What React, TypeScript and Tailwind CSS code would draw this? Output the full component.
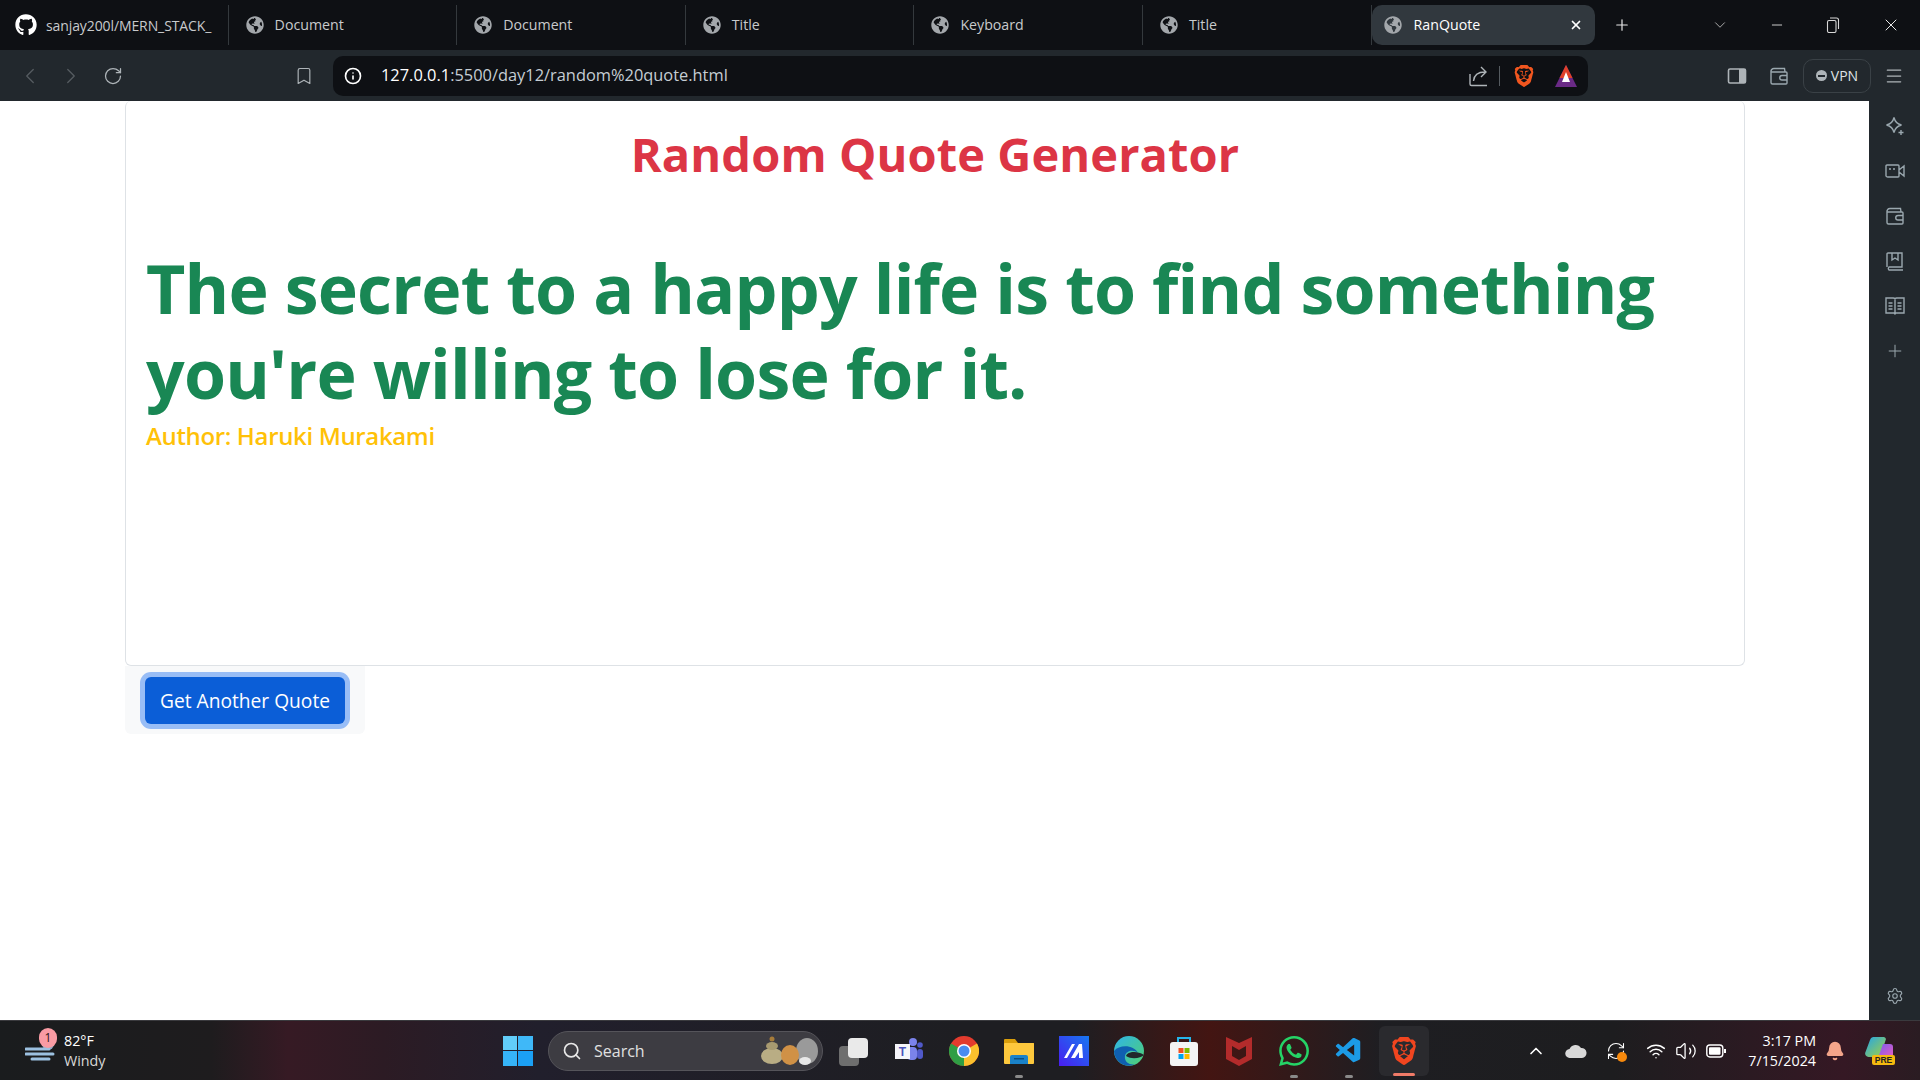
import { FaGithub, FaGlobeAmericas } from "react-icons/fa";
import { SiBrave, SiWhatsapp } from "react-icons/si";
import { VscVscode } from "react-icons/vsc";
import {
  ChevronLeft,
  ChevronRight,
  ChevronDown,
  ChevronUp,
  RotateCw,
  Bookmark,
  Info,
  Menu,
  Plus,
  X,
  Minus,
  Settings,
  Search,
  Wifi,
  Volume2,
  RefreshCw,
  Bell,
} from "lucide-react";

const tabs = ["sanjay200l/MERN_STACK_", "Document", "Document", "Title", "Keyboard", "Title"];

function Tab({ title, index }: { title: string; index: number }) {
  return (
    <div className="flex h-10 w-[228.6px] items-center overflow-hidden border-r border-[#34393d] pl-[15px] whitespace-nowrap last:border-r-0">
      {index === 0 ? (
        <FaGithub className="h-[22px] w-[22px] shrink-0 text-white" />
      ) : (
        <FaGlobeAmericas className="ml-[2px] h-[18px] w-[18px] shrink-0 text-[#a3a7ab]" />
      )}
      <span className={index === 0 ? "ml-[9px] text-[14px] tracking-[-0.1px] text-[#c8cacc]" : "ml-[11px] text-[14.2px] text-[#c8cacc]"}>{title}</span>
    </div>
  );
}

function TabBar() {
  return (
    <div className="flex h-[50px] items-center bg-[#0e1014]">
      {tabs.map((t, i) => (
        <Tab key={i} title={t} index={i} />
      ))}
      <div className="flex h-10 w-[223px] items-center rounded-[10px] bg-[#31383e] pl-[12px] pr-[12px]">
        <FaGlobeAmericas className="h-[18px] w-[18px] text-[#a3a7ab]" />
        <span className="ml-[12px] text-[14.2px] text-white">RanQuote</span>
        <X className="ml-auto h-[14px] w-[14px] text-white" strokeWidth={3} />
      </div>
      <Plus className="ml-[18px] h-[18px] w-[18px] text-[#e8e8e8]" strokeWidth={1.6} />
      <ChevronDown className="ml-[80px] h-[18px] w-[18px] text-[#b8b8b8]" strokeWidth={1.2} />
      <Minus className="ml-[40px] h-[16px] w-[16px] text-[#d8d8d8]" strokeWidth={1.4} />
      <svg className="ml-[41px]" width="14" height="16" viewBox="0 0 14 16" fill="none" stroke="#d8d8d8" strokeWidth="1.1">
        <rect x="1.5" y="3.5" width="8.5" height="12" rx="1.5" />
        <path d="M4 1 H10.5 A2 2 0 0 1 12.5 3 V12" />
      </svg>
      <X className="ml-[41px] h-[20px] w-[20px] text-[#e8e8e8]" strokeWidth={1.2} />
    </div>
  );
}

function BraveTriangle() {
  return (
    <svg width="24" height="24" viewBox="0 0 24 24">
      <path d="M12 1 L23 23 H1 Z" fill="#6a2a86" />
      <path d="M12 1 L18.5 14 H5.5 Z" fill="#e0402a" />
      <path d="M12 8 L16 18 H8 Z" fill="#ffffff" />
    </svg>
  );
}

function ShareIcon() {
  return (
    <svg className="ml-auto" width="22" height="22" viewBox="0 0 22 22" fill="none" stroke="#aeb4b8" strokeWidth="1.4">
      <path d="M2 9 V19 A1.5 1.5 0 0 0 3.5 20.5 H19" />
      <path d="M5.5 16 C6 10 10 7 17 7 M13 2 L18 7 L13 12" />
    </svg>
  );
}

function ToolBar() {
  return (
    <div className="flex h-[51px] items-center bg-[#22282d]">
      <ChevronLeft className="ml-[17px] h-[26px] w-[26px] text-[#565c61]" strokeWidth={1.2} />
      <ChevronRight className="ml-[15px] h-[26px] w-[26px] text-[#565c61]" strokeWidth={1.2} />
      <RotateCw className="ml-[19px] h-[20px] w-[20px] text-[#aeb4b8]" strokeWidth={1.5} />
      <Bookmark className="ml-[171px] h-[20px] w-[20px] text-[#aeb4b8]" strokeWidth={1.4} />
      <div className="ml-[19px] flex h-10 w-[1255px] items-center rounded-[10px] bg-[#0e1014] pl-[11px]">
        <Info className="h-[18px] w-[18px] text-white" strokeWidth={2.2} />
        <span className="ml-[19px] text-[16.4px] text-[#c5cdd3]">
          <span className="text-white">127.0.0.1</span>:5500/day12/random%20quote.html
        </span>
        <ShareIcon />
        <div className="ml-[9px] h-[20px] w-px bg-[#555b60]" />
        <SiBrave className="ml-[13px] h-[22px] w-[22px] text-[#f1561f]" />
        <div className="ml-[19px] mr-[10px] flex">
          <BraveTriangle />
        </div>
      </div>
      <svg className="ml-[139px]" width="20" height="20" viewBox="0 0 20 20" fill="none">
        <rect x="1.5" y="3" width="17" height="14" rx="1.5" stroke="#aeb4b8" strokeWidth="1.6" />
        <rect x="12" y="3" width="6.5" height="14" fill="#aeb4b8" />
      </svg>
      <WalletIcon className="ml-[22px]" size={20} />
      <div className="ml-[14px] flex h-[34px] w-[68px] items-center justify-center gap-[4px] rounded-[10px] border border-[#3a4146]">
        <span className="flex h-[11px] w-[11px] items-center justify-center rounded-full bg-[#aeb4b8]">
          <span className="h-[2px] w-[7px] bg-[#22282d]" />
        </span>
        <span className="text-[14px] text-[#dfe3e6]">VPN</span>
      </div>
      <Menu className="ml-[13px] h-[20px] w-[20px] text-[#aeb4b8]" strokeWidth={1.5} />
    </div>
  );
}

function WalletIcon({ className, size }: { className?: string; size: number }) {
  return (
    <svg className={className} width={size} height={size} viewBox="0 0 20 20" fill="none" stroke="#9aa7ae" strokeWidth="1.4">
      <path d="M2 6 V16.5 A1.5 1.5 0 0 0 3.5 18 H17 A1 1 0 0 0 18 17 V7 A1 1 0 0 0 17 6 H2 Z M2 6 A3 3 0 0 1 5 2.5 H15.5 L16 6" />
      <path d="M18 9.5 H13 A2 2 0 0 0 13 14 H18" />
    </svg>
  );
}

function SidePanel() {
  const s = { fill: "none", stroke: "#9aa7ae", strokeWidth: 1.4 };
  return (
    <aside className="flex w-[51px] flex-col items-center bg-[#22282d] pt-[15px] pb-[15px]">
      <div className="flex flex-col items-center gap-[25px]">
        <svg width="20" height="20" viewBox="0 0 20 20" {...s}>
          <path d="M9 1.5 C10 6 12 8 16.5 9 C12 10 10 12 9 16.5 C8 12 6 10 1.5 9 C6 8 8 6 9 1.5 Z" />
          <path d="M16 14 V19 M13.5 16.5 H18.5" />
        </svg>
        <svg width="20" height="20" viewBox="0 0 20 20" {...s}>
          <path d="M2 4 H13 A1 1 0 0 1 14 5 V15 A1 1 0 0 1 13 16 H3 A2 2 0 0 1 1 15 V5 A1 1 0 0 1 2 4 Z M14 9 L19 5 V15 L14 11 M4 8 H6 M8 8 H10" />
        </svg>
        <WalletIcon size={20} />
        <svg width="20" height="20" viewBox="0 0 20 20" {...s}>
          <path d="M2 16 V3 A1 1 0 0 1 3 2 H17 V16 H4 A2 2 0 0 0 4 19 H18 M7 2 V9 L10 7 L13 9 V2" />
        </svg>
        <svg width="20" height="20" viewBox="0 0 20 20" {...s}>
          <path d="M10 4 V17.5 M1 2 H8 A2 2 0 0 1 10 3 A2 2 0 0 1 12 2 H19 V17 H11 L10 18 L9 17 H1 Z M3.5 7 H7.5 M3.5 10 H7.5 M3.5 13 H7.5 M12.5 7 H16.5 M12.5 10 H16.5 M12.5 13 H16.5" />
        </svg>
        <Plus className="h-[20px] w-[20px] text-[#9aa7ae]" strokeWidth={1.2} />
      </div>
      <Settings className="mt-auto h-[18px] w-[18px] text-[#9aa7ae]" strokeWidth={1.5} />
    </aside>
  );
}

function QuotePage() {
  return (
    <main className="flex-1 bg-white pl-[125px] pr-[124px] font-['Open_Sans',sans-serif]">
      <div className="h-[565px] rounded-md border border-t-0 border-[#dee2e6]">
        <h1 className="pt-[20px] text-center text-[47px] leading-[66px] font-bold tracking-[0.1px] text-[#dc3545]">Random Quote Generator</h1>
        <div className="pt-[58px] pl-[20px]">
          <h2 className="text-[68px] leading-[85px] font-bold tracking-[-0.8px] text-[#198754]">
            The secret to a happy life is to find something you're willing to lose for it.
          </h2>
          <p className="text-[24px] leading-[42px] font-semibold tracking-[-0.35px] text-[#ffc107]">Author: Haruki Murakami</p>
        </div>
      </div>
      <div className="flex h-[68px] w-[240px] items-start rounded-b-md bg-[#f8f9fa] pt-[11px] pl-[20px]">
        <button className="h-[47px] w-[200px] rounded-md bg-[#0b5ed7] pt-[2px] text-[19.2px] text-white ring-[5px] ring-[#98bdf6]">Get Another Quote</button>
      </div>
    </main>
  );
}

function ChromeIcon() {
  return (
    <svg width="30" height="30" viewBox="0 0 30 30">
      <circle cx="15" cy="15" r="15" fill="#e33b2e" />
      <path d="M15 15 L28 7.5 A15 15 0 0 1 15 30 Z" fill="#fbc02d" />
      <path d="M15 15 L15 30 A15 15 0 0 1 2 7.5 Z" fill="#2f9e44" />
      <circle cx="15" cy="15" r="7" fill="#fff" />
      <circle cx="15" cy="15" r="5.5" fill="#4a8cf0" />
    </svg>
  );
}

function FolderIcon() {
  return (
    <svg width="30" height="30" viewBox="0 0 30 30">
      <path d="M0 4 A1 1 0 0 1 1 3 H11 L14 7 H30 V10 H0 Z" fill="#d99e0b" />
      <rect x="0" y="7" width="30" height="21" rx="1" fill="#fdc83d" />
      <path d="M6 21 A2 2 0 0 1 8 19 H22 A2 2 0 0 1 24 21 V28 H6 Z" fill="#1a82c9" />
      <rect x="10" y="22" width="10" height="1.5" fill="#0c4f80" />
    </svg>
  );
}

function MaIcon() {
  return (
    <svg width="30" height="30" viewBox="0 0 30 30">
      <defs>
        <linearGradient id="ma" x1="0" y1="1" x2="1" y2="0">
          <stop offset="0" stopColor="#4a1df0" />
          <stop offset="1" stopColor="#1678f0" />
        </linearGradient>
      </defs>
      <rect width="30" height="30" fill="url(#ma)" />
      <path d="M5 22 L13 8 H16 L8 22 Z M12 22 L20 8 H23 L24 22 H20 L20 16 L16 22 Z" fill="#fff" />
    </svg>
  );
}

function EdgeIcon() {
  return (
    <svg width="30" height="30" viewBox="0 0 30 30">
      <defs>
        <linearGradient id="ed" x1="0" y1="0" x2="1" y2="1">
          <stop offset="0" stopColor="#2fb4e8" />
          <stop offset="1" stopColor="#50d070" />
        </linearGradient>
      </defs>
      <circle cx="15" cy="15" r="15" fill="url(#ed)" />
      <path d="M0 15 A15 15 0 0 0 22 28 C16 30 10 26 11 20 C12 15 19 13 24 17 C20 9 6 8 0 15 Z" fill="#0f5fb0" />
      <path d="M12 20 C13 16 22 14 30 19 C27 22 18 24 12 20 Z" fill="#22262b" />
    </svg>
  );
}

function StoreIcon() {
  return (
    <svg width="30" height="30" viewBox="0 0 30 30">
      <path d="M9 6 V2 H21 V6" fill="none" stroke="#25b5ea" strokeWidth="2" />
      <rect x="1" y="6" width="28" height="24" rx="3" fill="#f4f4f4" />
      <rect x="9.5" y="12" width="5" height="5" fill="#f25022" />
      <rect x="15.5" y="12" width="5" height="5" fill="#7fba00" />
      <rect x="9.5" y="18" width="5" height="5" fill="#00a4ef" />
      <rect x="15.5" y="18" width="5" height="5" fill="#ffb900" />
    </svg>
  );
}

function McafeeIcon() {
  return (
    <svg width="28" height="30" viewBox="0 0 28 30">
      <path d="M1 1 L14 7 L27 1 V23 L14 30 L1 23 Z M7 10 V20 L14 24 L21 20 V10 L14 14 Z" fill="#b32b2b" fillRule="evenodd" />
    </svg>
  );
}

function TeamsIcon() {
  return (
    <svg width="28" height="28" viewBox="0 0 28 28">
      <circle cx="18" cy="5" r="4" fill="#7b83eb" />
      <circle cx="25" cy="8" r="2.8" fill="#5059c9" />
      <rect x="12" y="10" width="10" height="13" rx="4" fill="#7b83eb" />
      <rect x="22" y="12" width="6" height="10" rx="3" fill="#5059c9" />
      <rect x="0" y="7" width="15" height="15" fill="#f5f5fa" />
      <text x="7.5" y="19" textAnchor="middle" fontSize="12" fontWeight="700" fill="#4b53bc" fontFamily="Liberation Sans">T</text>
    </svg>
  );
}

function CopilotIcon() {
  return (
    <svg className="ml-[20px]" width="30" height="28" viewBox="0 0 30 28">
      <defs>
        <linearGradient id="cpa" x1="0" y1="0" x2="1" y2="1">
          <stop offset="0" stopColor="#22a5ea" />
          <stop offset="1" stopColor="#a6d23a" />
        </linearGradient>
        <linearGradient id="cpb" x1="0" y1="0" x2="1" y2="1">
          <stop offset="0" stopColor="#7a5cf0" />
          <stop offset="1" stopColor="#e85cc0" />
        </linearGradient>
      </defs>
      <path d="M8 0 H19 A3 3 0 0 1 21 2 L15 20 H4 A3.5 3.5 0 0 1 0.5 15 L5 3 A4 4 0 0 1 8 0 Z" fill="url(#cpa)" />
      <path d="M18 7 H25 A3 3 0 0 1 28 10 V18 A3 3 0 0 1 25 21 H13 Z" fill="url(#cpb)" />
      <rect x="7" y="18" width="23" height="10" rx="2" fill="#f5b90f" />
      <text x="18.5" y="26" textAnchor="middle" fontSize="8.5" fontWeight="700" fill="#222" fontFamily="Liberation Sans">PRE</text>
    </svg>
  );
}

function TaskIcon({ children, mark }: { children: React.ReactNode; mark?: boolean }) {
  return (
    <div className="relative flex h-[60px] w-[55px] items-center justify-center">
      {children}
      {mark && <span className="absolute bottom-[3px] h-[3px] w-[8px] rounded-full bg-[#8a8a8a]" />}
    </div>
  );
}

function Taskbar() {
  return (
    <footer className="flex h-[60px] items-center border-t border-[#3a3a3e] bg-[linear-gradient(90deg,#1a1c1e_0%,#1e1c1e_11%,#361a24_15%,#2c1b24_20%,#211f2c_28%,#1e1e22_50%,#1e1e22_56%,#431512_63%,#1e1e22_72%,#1d1d1f_84%,#351824_96%,#2a1c22_100%)] font-['Open_Sans',sans-serif] text-white">
      {/* weather */}
      <div className="relative flex w-[490px] items-center pl-[25px]">
        <svg width="30" height="30" viewBox="0 0 30 30" fill="none">
          <circle cx="23" cy="8" r="6" fill="#90a8c4" />
          <path d="M1 13 H24 M1 18 H28 M7 23 H24" stroke="#9cc0e0" strokeWidth="3" strokeLinecap="round" />
        </svg>
        <span className="absolute -top-[3px] left-[39px] flex h-[20px] w-[18px] items-center justify-center rounded-full bg-[#f99ba4] text-[12px] text-[#2a1518]">1</span>
        <div className="ml-[9px] flex flex-col text-[14.3px] leading-[20px]">
          <span>82°F</span>
          <span className="text-[#d8d8d8]">Windy</span>
        </div>
      </div>
      <div className="flex w-[55px] justify-center">
        <div className="grid grid-cols-2 gap-[1px]">
          <span className="h-[14.5px] w-[14.5px] bg-[#62cdf9]" />
          <span className="h-[14.5px] w-[14.5px] bg-[#3fb8f8]" />
          <span className="h-[14.5px] w-[14.5px] bg-[#36b4f8]" />
          <span className="h-[14.5px] w-[14.5px] bg-[#1ba0f5]" />
        </div>
      </div>
      <div className="ml-[3px] flex h-10 w-[275px] items-center rounded-full border border-[#55545a] bg-[#3d3c42] pl-[13px]">
        <Search className="h-[20px] w-[20px] text-[#e8e8e8]" strokeWidth={2} />
        <span className="ml-[12px] text-[16px] text-[#e0e0e0]">Search</span>
        <svg className="ml-auto mr-[1px]" width="64" height="36" viewBox="0 0 64 36">
          <ellipse cx="50" cy="18" rx="11" ry="13" fill="#9a9a9a" />
          <ellipse cx="15" cy="23" rx="11" ry="8" fill="#b9ad84" />
          <ellipse cx="15" cy="13" rx="6" ry="4" fill="#a89a70" />
          <circle cx="15" cy="6" r="2.5" fill="#a67c3a" />
          <ellipse cx="33" cy="22" rx="9" ry="10" fill="#d09146" />
          <ellipse cx="48" cy="28" rx="6" ry="4" fill="#e8e8e8" />
        </svg>
      </div>
      <div className="ml-[3px] flex items-center">
        <TaskIcon>
          <div className="relative h-[26px] w-[30px]">
            <span className="absolute top-[8px] left-0 h-[20px] w-[20px] rounded-sm bg-[#6e6e6e]" />
            <span className="absolute top-0 left-[9px] h-[20px] w-[20px] rounded-sm bg-[#eaeaea]" />
          </div>
        </TaskIcon>
        <TaskIcon><TeamsIcon /></TaskIcon>
        <TaskIcon><ChromeIcon /></TaskIcon>
        <TaskIcon mark><FolderIcon /></TaskIcon>
        <TaskIcon><MaIcon /></TaskIcon>
        <TaskIcon><EdgeIcon /></TaskIcon>
        <TaskIcon><StoreIcon /></TaskIcon>
        <TaskIcon><McafeeIcon /></TaskIcon>
        <TaskIcon mark><SiWhatsapp className="h-[30px] w-[30px] text-[#25d366]" /></TaskIcon>
        <TaskIcon mark><VscVscode className="h-[30px] w-[30px] text-[#1c9be6]" /></TaskIcon>
        <div className="relative ml-[3px] flex h-[50px] w-[50px] items-center justify-center rounded-md bg-[#2a2a2e]">
          <SiBrave className="h-[28px] w-[28px] text-[#f1451f]" />
          <span className="absolute bottom-0 h-[3px] w-[22px] rounded-full bg-[#f07b68]" />
        </div>
      </div>
      <div className="ml-[97px] flex items-center">
        <ChevronUp className="h-[20px] w-[20px]" strokeWidth={2} />
        <svg className="ml-[19px]" width="22" height="14" viewBox="0 0 22 14">
          <path d="M5 14 A4.5 4.5 0 0 1 4.5 5 A6.5 6.5 0 0 1 16 4 A5 5 0 0 1 17 14 Z" fill="#d8d8d8" />
        </svg>
        <div className="relative ml-[19px]">
          <RefreshCw className="h-[20px] w-[20px]" strokeWidth={1.3} />
          <span className="absolute -right-[1px] -bottom-[1px] h-[10px] w-[10px] rounded-full bg-[#f7890c]" />
        </div>
        <Wifi className="ml-[20px] h-[20px] w-[20px]" strokeWidth={1.8} />
        <Volume2 className="ml-[9px] h-[22px] w-[22px]" strokeWidth={1.4} />
        <svg className="ml-[9px]" width="20" height="14" viewBox="0 0 20 14" fill="none">
          <rect x="0.8" y="1" width="16" height="12" rx="3" stroke="#fff" strokeWidth="1.4" />
          <rect x="3" y="3.2" width="11.5" height="7.6" rx="1" fill="#fff" />
          <rect x="18" y="5" width="2" height="4" fill="#fff" />
        </svg>
        <div className="ml-[20px] flex w-[70px] flex-col items-end text-[14.3px] leading-[20px] whitespace-nowrap">
          <span>3:17 PM</span>
          <span>7/15/2024</span>
        </div>
        <Bell className="ml-[9px] h-[20px] w-[20px] fill-[#f4a58a] text-[#f4a58a]" />
        <CopilotIcon />
      </div>
    </footer>
  );
}

export default function App() {
  return (
    <div className="flex h-[1080px] w-[1920px] flex-col overflow-hidden bg-white font-['Open_Sans',sans-serif]">
      <TabBar />
      <ToolBar />
      <div className="flex flex-1">
        <QuotePage />
        <SidePanel />
      </div>
      <Taskbar />
    </div>
  );
}
